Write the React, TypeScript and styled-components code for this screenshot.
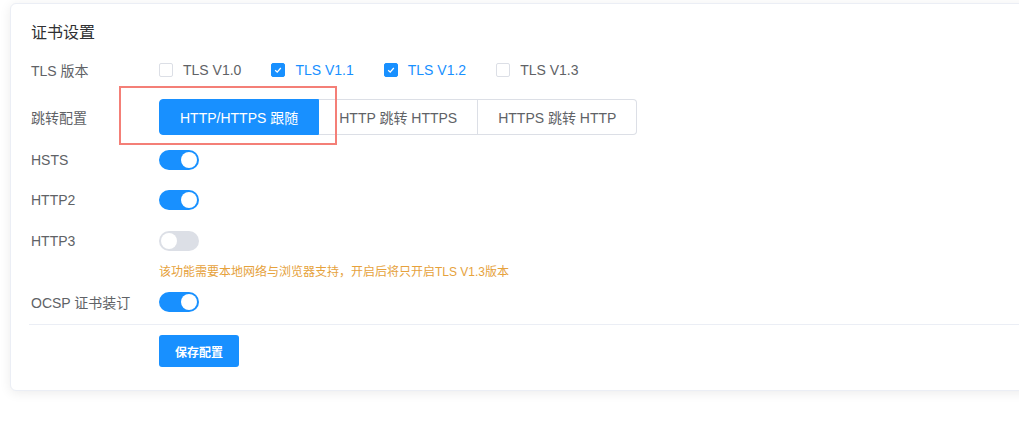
import React from "react";
import styled, { createGlobalStyle } from "styled-components";

const Global = createGlobalStyle`
  html, body { margin: 0; padding: 0; background: #fff; overflow: hidden; }
  body { font-family: "Liberation Sans", Arial, "Noto Sans CJK SC", sans-serif; }
`;

const Page = styled.div`
  width: 1019px;
  height: 448px;
  overflow: hidden;
  padding: 3px 0 0 10px;
  box-sizing: border-box;
`;

const Card = styled.div`
  width: 1060px;
  border: 1px solid #ebeef5;
  border-radius: 6px;
  background: #fff;
  box-shadow: 0 2px 12px rgba(0, 0, 0, 0.08);
  padding: 0 20px 23px 20px;
  box-sizing: border-box;
`;

const Title = styled.div`
  padding-top: 18px;
  line-height: 22px;
  font-size: 16px;
  color: #303133;
  margin-bottom: 6px;
`;

const Row = styled.div<{ $mt?: number; $h?: number }>`
  position: relative;
  display: flex;
  align-items: center;
  height: ${(p) => p.$h ?? 40}px;
  margin-top: ${(p) => p.$mt ?? 0}px;
`;

const Label = styled.div`
  width: 128px;
  flex-shrink: 0;
  font-size: 14px;
  color: #606266;
`;

const Checks = styled.div`
  display: flex;
  align-items: center;
`;

const CheckItem = styled.label<{ $on?: boolean }>`
  display: flex;
  align-items: center;
  margin-right: 30px;
  font-size: 14px;
  color: ${(p) => (p.$on ? "#1890ff" : "#606266")};
`;

const Box = styled.span<{ $on?: boolean }>`
  width: 14px;
  height: 14px;
  box-sizing: border-box;
  border-radius: 2px;
  border: 1px solid ${(p) => (p.$on ? "#1890ff" : "#dcdfe6")};
  background: ${(p) => (p.$on ? "#1890ff" : "#fff")};
  margin-right: 10px;
  display: flex;
  align-items: center;
  justify-content: center;
`;

const Group = styled.div`
  display: flex;
`;

const SegBtn = styled.div<{ $on?: boolean; $first?: boolean; $last?: boolean }>`
  height: 36px;
  box-sizing: border-box;
  padding: 0 20px;
  display: flex;
  align-items: center;
  font-size: 14px;
  border: 1px solid ${(p) => (p.$on ? "#1890ff" : "#dcdfe6")};
  border-left-width: ${(p) => (p.$first ? 1 : 0)}px;
  background: ${(p) => (p.$on ? "#1890ff" : "#fff")};
  color: ${(p) => (p.$on ? "#fff" : "#606266")};
  border-radius: ${(p) =>
    p.$first ? "4px 0 0 4px" : p.$last ? "0 4px 4px 0" : "0"};
`;

const Annotation = styled.div`
  position: absolute;
  left: 88px;
  top: -11px;
  width: 218px;
  height: 59px;
  box-sizing: border-box;
  border: 2px solid #f47f77;
  pointer-events: none;
`;

const Switch = styled.div<{ $on?: boolean }>`
  width: 40px;
  height: 20px;
  border-radius: 10px;
  background: ${(p) => (p.$on ? "#1890ff" : "#dcdfe6")};
  display: flex;
  align-items: center;
  justify-content: ${(p) => (p.$on ? "flex-end" : "flex-start")};
  padding: 0 2px;
  box-sizing: border-box;
`;

const Knob = styled.span`
  width: 16px;
  height: 16px;
  border-radius: 50%;
  background: #fff;
`;

const Hint = styled.div`
  font-size: 12px;
  color: #e6a23c;
`;

const Divider = styled.div`
  height: 1px;
  background: #ebeef5;
  margin: 2px 0 0 -2px;
`;

const SaveBtn = styled.button`
  width: 80px;
  height: 32px;
  border: none;
  border-radius: 3px;
  background: #1890ff;
  color: #fff;
  font-size: 12px;
  font-weight: bold;
  font-family: inherit;
  padding: 0;
`;

const Check = () => (
  <svg width="10" height="10" viewBox="0 0 10 10">
    <path d="M2.2 5.2 L4.2 7.1 L7.8 3" fill="none" stroke="#fff" strokeWidth="1.3" />
  </svg>
);

const tls = [
  { t: "TLS V1.0", on: false },
  { t: "TLS V1.1", on: true },
  { t: "TLS V1.2", on: true },
  { t: "TLS V1.3", on: false },
];

const Toggle = ({ on }: { on: boolean }) => (
  <Switch $on={on}>
    <Knob />
  </Switch>
);

export default function App() {
  return (
    <>
      <Global />
      <Page>
        <Card>
          <Title>证书设置</Title>
          <Row>
            <Label>TLS 版本</Label>
            <Checks>
              {tls.map((c) => (
                <CheckItem key={c.t} $on={c.on}>
                  <Box $on={c.on}>{c.on && <Check />}</Box>
                  {c.t}
                </CheckItem>
              ))}
            </Checks>
          </Row>
          <Row $mt={7}>
            <Label>跳转配置</Label>
            <Group>
              <SegBtn $on $first>HTTP/HTTPS 跟随</SegBtn>
              <SegBtn>HTTP 跳转 HTTPS</SegBtn>
              <SegBtn $last>HTTPS 跳转 HTTP</SegBtn>
            </Group>
            <Annotation />
          </Row>
          <Row $mt={3}>
            <Label>HSTS</Label>
            <Toggle on />
          </Row>
          <Row>
            <Label>HTTP2</Label>
            <Toggle on />
          </Row>
          <Row $mt={1}>
            <Label>HTTP3</Label>
            <Toggle on={false} />
          </Row>
          <Row $mt={1} $h={16}>
            <Label />
            <Hint>该功能需要本地网络与浏览器支持，开启后将只开启TLS V1.3版本</Hint>
          </Row>
          <Row $mt={4}>
            <Label>OCSP 证书装订</Label>
            <Toggle on />
          </Row>
          <Divider />
          <Row $mt={10} $h={32}>
            <Label />
            <SaveBtn>保存配置</SaveBtn>
          </Row>
        </Card>
      </Page>
    </>
  );
}
